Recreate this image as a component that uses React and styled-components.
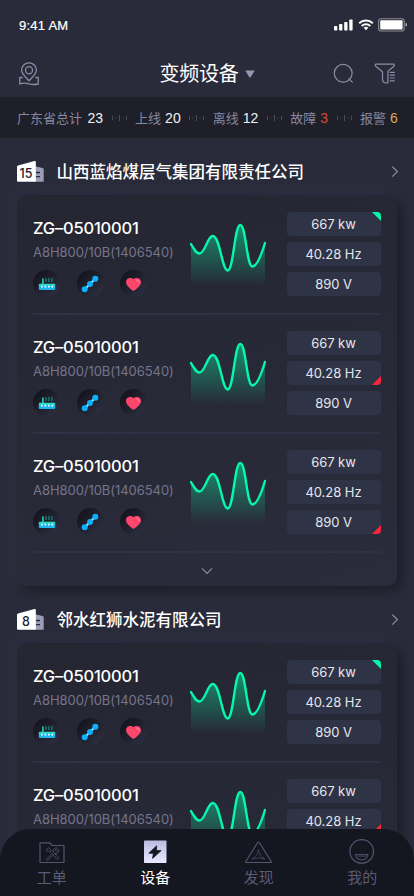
import React from 'react'
import styled, { createGlobalStyle } from 'styled-components'

const GlobalStyle = createGlobalStyle`
    * {
        box-sizing: border-box;
    }
    body {
        margin: 0;
        background: #2a2b3b;
        font-family: Inter, "Noto Sans CJK SC", sans-serif;
    }
    svg {
        display: block;
    }
`
const Screen = styled.div`
    width: 414px;
    height: 896px;
    overflow: hidden;
    display: flex;
    flex-direction: column;
    color: white;
    background: #2a2b3a;
`
const StatusBar = styled.div`
    height: 49px;
    flex: none;
    display: flex;
    align-items: center;
    justify-content: space-between;
    padding: 1px 6px 0 19px;
`
const Time = styled.span`
    font-family: "Liberation Sans", sans-serif;
    font-size: 13px;
    letter-spacing: .25px;
    -webkit-text-stroke: .2px white;
`
const StatusIcons = styled.div`
    display: flex;
    align-items: center;
    gap: 4.5px;
`
const TopBar = styled.header`
    height: 48px;
    flex: none;
    display: grid;
    grid-template-columns: 1fr auto 1fr;
    align-items: center;
    padding: 1px 18px 0 18px;
`
const Title = styled.h1`
    margin: 0;
    display: flex;
    align-items: center;
    gap: 6px;
    font-size: 20px;
    font-weight: 400;
    line-height: 30px;
    letter-spacing: -.2px;
`
const Tools = styled.div`
    display: flex;
    justify-content: flex-end;
    gap: 20px;
`
const Stats = styled.div`
    height: 41px;
    flex: none;
    display: flex;
    align-items: center;
    justify-content: space-between;
    padding: 0 16px 0 17px;
    background: #1e1f29;
`
const Stat = styled.span`
    display: flex;
    align-items: center;
    gap: 4px;
    font-size: 13px;
    line-height: 20px;
    color: #8788a0;

    &:first-child {
        gap: 5.5px;
    }
`
const StatValue = styled.span`
    font-family: "Liberation Sans", sans-serif;
    font-size: 14px;
    color: ${props => props.$color || '#f2f2f5'};
`
const List = styled.main`
    flex: 1;
    min-height: 0;
    overflow: hidden;
    margin-bottom: -31px;
    padding: 0 17px;
`
const Section = styled.section`
    height: 448px;
`
const SectionHead = styled.div`
    height: 57px;
    display: flex;
    align-items: center;
    padding: 10px 0 0;
    margin-right: -2px;
`
const Company = styled.h2`
    flex: 1;
    margin: 0 0 0 12.5px;
    font-size: 16.5px;
    font-weight: 500;
    line-height: 24px;
`
const Card = styled.div`
    height: 391px;
    padding: 1px 16px 0;
    border-radius: 10px;
    background: linear-gradient(165deg, #252632, #2b2c3b);
    box-shadow: 5px 5px 10px #1e1f2a, -6px -6px 14px #2e2f42;
`
const Row = styled.div`
    height: 119px;
    display: flex;
    align-items: flex-start;
    padding-top: 16px;
    border-bottom: 2px solid #2f3144;
`
const Info = styled.div`
    width: 157px;
`
const Code = styled.div`
    margin-top: 4px;
    font-size: 16.5px;
    font-weight: 500;
    line-height: 24px;
    letter-spacing: -.2px;
    white-space: nowrap;
`
const Model = styled.div`
    margin-top: 2px;
    font-size: 13px;
    line-height: 20px;
    letter-spacing: -.05px;
    color: #74758c;
    white-space: nowrap;
`
const Badges = styled.div`
    display: flex;
    gap: 16.5px;
    margin-top: 8px;
`
const Badge = styled.div`
    width: 27px;
    height: 27px;
    display: flex;
    align-items: center;
    justify-content: center;
    border-radius: 50%;
    background: linear-gradient(135deg, #11121a 8%, #1e1f2a 45%, #2e3043 92%);
`
const Chart = styled.div`
    padding-top: 10px;
`
const Readings = styled.div`
    display: flex;
    flex-direction: column;
    gap: 6px;
    margin-left: auto;
`
const Reading = styled.div`
    position: relative;
    width: 94px;
    height: 24px;
    overflow: hidden;
    border-radius: 4px;
    background: #2f3346;
    color: #e6e6ec;
    font-size: 13px;
    line-height: 24px;
    letter-spacing: -.05px;
    padding-right: 1px;
    text-align: center;

    &::after {
        content: '';
        display: ${props => props.$flag ? 'block' : 'none'};
        position: absolute;
        right: 0;
        ${props => props.$flag === 'up' ? 'top: 0;' : 'bottom: 0;'}
        width: 9px;
        height: 9px;
        background: ${props => props.$flag === 'up' ? '#05f8ab' : '#fb2438'};
        clip-path: ${props => props.$flag === 'up'
            ? 'polygon(0 0, 100% 0, 100% 100%)'
            : 'polygon(100% 0, 100% 100%, 0 100%)'};
    }
`
const More = styled.div`
    height: 33px;
    display: flex;
    align-items: center;
    justify-content: center;
    padding: 3px 1px 0 0;
`
const TabBar = styled.nav`
    position: relative;
    height: 67px;
    flex: none;
    display: grid;
    grid-template-columns: repeat(4, 1fr);
    border-radius: 31px 31px 0 0;
    background: #141620;
`
const Tab = styled.div`
    display: flex;
    flex-direction: column;
    align-items: center;
    padding-top: 9px;
    font-size: 15px;
    line-height: 24px;
    color: ${props => props.$active ? 'white' : '#5a5b76'};
`
const TabIcon = styled.div`
    height: 26px;
    display: flex;
    align-items: flex-end;
    margin-bottom: 2px;
`

const Signal = () => (
    <svg width="19" height="14" viewBox="0 0 19 14" fill="white">
        <rect x="0" y="8" width="3.3" height="4.5" rx=".8" />
        <rect x="5.1" y="6" width="3.3" height="6.5" rx=".8" />
        <rect x="10.2" y="4" width="3.3" height="8.5" rx=".8" />
        <rect x="15.3" y="1.5" width="3.3" height="11" rx=".8" />
    </svg>
)

const Wifi = () => (
    <svg width="16" height="14" viewBox="0 0 16 14">
        <path d="M8 12.3l-2.3-2.5a3.4 3.4 0 014.6 0z" fill="white" />
        <path d="M1.2 5.2a9.9 9.9 0 0113.6 0M3.7 8a6.300 6.300 0 018.6 0" fill="none" stroke="white" strokeWidth="2" />
    </svg>
)

const Battery = () => (
    <svg width="30" height="14" viewBox="0 0 30 14">
        <rect x=".6" y=".7" width="25.6" height="12.3" rx="2.6" fill="none" stroke="#8b8b91" strokeWidth="1.1" />
        <rect x="2.2" y="2.3" width="22.4" height="9.1" rx="1" fill="white" />
        <path d="M27.6 4.8v4c1.8-.7 1.8-3.3 0-4z" fill="#c8c8cc" />
    </svg>
)

const PinIcon = () => (
    <svg width="22" height="24" viewBox="0 0 22 24" fill="none" stroke="#8b8ca6" strokeWidth="1.3" strokeLinejoin="round" strokeLinecap="round">
        <path d="M11 18.8C8 15.5 3.6 11.7 3.6 8.200a7.400 7.400 0 0114.8 0c0 3.500-4.400 7.300-7.400 10.600z" />
        <circle cx="11" cy="8.2" r="3.5" />
        <path d="M4.200 15.500H1.800v6.500c3-1.200 6-1.200 9.200-.2 3.200.9 6.200.9 9.200.2v-6.500h-2.400" />
    </svg>
)

const SearchIcon = () => (
    <svg width="22" height="22" viewBox="0 0 22 22" fill="none" stroke="#8b8ca6" strokeWidth="1.2" strokeLinecap="round">
        <circle cx="11.2" cy="10.3" r="8.9" />
        <path d="M16.700 15.600l3.600 3.600" />
    </svg>
)

const FilterIcon = () => (
    <svg width="22" height="22" viewBox="0 0 22 22" fill="none" stroke="#8b8ca6" strokeWidth="1.2" strokeLinecap="round" strokeLinejoin="round">
        <path d="M1.700 1.200h18.200q.9.900 0 2l-6 5.200v11.600H11.500q-3-.6-3-3.500V8.700L1.700 3.200q-.9-1.100 0-2z" />
        <path d="M16.200 9.400h4.200M16.200 12.200h4.200M16.200 15h4.200M16.200 17.800h4.200" />
    </svg>
)

const Dots = () => (
    <svg width="15" height="8" viewBox="0 0 15 8" stroke="#494a5c" strokeWidth="1">
        <path d="M.5 2v4M4 3.5v1.200M7.500 1v6M11 3.500v1.200M14.500 2v4" />
    </svg>
)

const CountBox = styled.div`
    position: relative;
    width: 27px;
    height: 22px;
`
const CountLabel = styled.span`
    position: absolute;
    left: 0;
    top: 6px;
    width: 18px;
    color: #22232e;
    font-size: 12.5px;
    font-weight: 500;
    line-height: 14px;
    text-align: center;
`

const Count = ({ value }) => (
    <CountBox>
        <svg width="27" height="22" viewBox="0 0 27 22">
            <path d="M18 5.200l7.500 1.800q1.200.4 1.200 1.500v12.300H18z" fill="#9a9db6" />
            <path d="M19 11.500h4M19 15.700h4" stroke="#2a2b3a" strokeWidth="1.3" />
            <path d="M0 5.700q0-1 1-1.300L17.500.1q1.300-.3 1.300 1v19.700H1q-1 0-1-1z" fill="white" />
        </svg>
        <CountLabel>{value}</CountLabel>
    </CountBox>
)

const Chevron = () => (
    <svg width="8" height="12" viewBox="0 0 8 12" fill="none" stroke="#8b8ca6" strokeWidth="1.3">
        <path d="M1.300.6l5 5-5 5" />
    </svg>
)

const RouterIcon = () => (
    <svg width="18" height="14" viewBox="0 0 18 14">
        <rect x="4.2" y="1.5" width="1.5" height="6" fill="#21dfc0" />
        <path d="M7.500 1q1.400 1.700 0 4M10.500 1q1.400 1.700 0 4M13.500 1q1.400 1.700 0 4" fill="none" stroke="#137e79" strokeWidth="1.3" />
        <rect x=".8" y="6.7" width="16.4" height="3" rx="1" fill="#28e0bf" />
        <rect x=".8" y="8.5" width="16.4" height="4.4" rx="1" fill="#1db6ee" />
        <path d="M3 9.700h1.700M6.500 9.700h1.700M10 9.700h1.700M13.500 9.700h1.700" stroke="white" strokeWidth="1.8" />
    </svg>
)

const LinkIcon = () => (
    <svg width="18" height="18" viewBox="0 0 18 18">
        <path d="M3.500 14.500L14.500 3.500" stroke="#8ee6ff" strokeWidth="2.4" />
        <g fill="#0cb0ff">
            <circle cx="3.7" cy="14.3" r="3" />
            <circle cx="9" cy="9" r="2.9" />
            <circle cx="14.3" cy="3.7" r="3" />
        </g>
    </svg>
)

const HeartIcon = () => (
    <svg width="17" height="14" viewBox="0 1 17 14">
        <path d="M8.500 15C4.500 12.100 1 9.300 1 5.900 1 2 6 .7 8.500 3.300 11 .7 16 2 16 5.900c0 3.400-3.500 6.200-7.500 9.100z" fill="#fe466d" />
        <path d="M11.500 3.900q2.500-.1 2.700 2.600" fill="none" stroke="#ff7f98" strokeWidth="1" strokeLinecap="round" />
    </svg>
)

const wave = 'M1 22C4 27 6 31.500 9.500 31.500C15 31.500 17.500 14 22.800 14C30 14 32 48.500 37.700 48.500C43.500 48.500 44.500 3 50.300 3C56 3 56.500 44.500 62.500 44.500C66.500 44.500 71 34 75 21'

const Wave = ({ id }) => (
    <svg width="76" height="66" viewBox="0 0 76 66">
        <defs>
            <linearGradient id={id} x1="0" y1="0" x2="0" y2="1">
                <stop offset="0" stopColor="#10c68e" stopOpacity=".65" />
                <stop offset="1" stopColor="#10c68e" stopOpacity="0" />
            </linearGradient>
        </defs>
        <path d={wave + 'V64H1z'} fill={`url(#${id})`} />
        <path d={wave} fill="none" stroke="#05f8ab" strokeWidth="2.4" strokeLinecap="round" />
    </svg>
)

const OrderIcon = () => (
    <svg width="26" height="24" viewBox="0 0 26 24" fill="none" stroke="#54556f" strokeWidth="1.2" strokeLinejoin="round">
        <path d="M1 2.800h9.500l2.800 2.700H25v17H1z" />
        <g strokeWidth="1" stroke="#4a4b62">
            <path d="M7.500 19.200l7-7.200a3 3 0 013.800-4l-2 2 1.300 1.400 2-2a3 3 0 01-4 4l-7 7.200z" />
            <path d="M7 10l2.500-2.300 3 2.800-1.500 1.500M7 10l1.300 1.400 1.200-.5 1.500 1.600M14.300 15.200l4 4.200 1.500-1.400-4-4.200" />
        </g>
    </svg>
)

const DeviceIcon = () => (
    <svg width="26" height="24" viewBox="0 0 26 24">
        <defs>
            <linearGradient id="device" x1="0" y1="0" x2="0" y2="1">
                <stop offset="0" stopColor="#b9bbe0" />
                <stop offset="1" stopColor="#e9eaff" />
            </linearGradient>
        </defs>
        <rect x="2" y=".5" width="22.5" height="22.5" rx=".8" fill="url(#device)" />
        <path d="M14.700 5.800L6.800 13.200h4.600l-.8 5.200 8.500-7.800h-4.700z" fill="#141620" stroke="#141620" strokeWidth=".8" strokeLinejoin="round" />
    </svg>
)

const DiscoverIcon = () => (
    <svg width="28" height="24" viewBox="0 0 28 24" fill="none" stroke="#54556f" strokeLinejoin="round">
        <path d="M12.700 2.500q.8-1 1.600 0L26.200 21.500q.4 1-.6 1H1.400q-1 0-.6-1z" strokeWidth="1.2" />
        <path d="M13.500 9.500q.7 6.500 6.500 9.500-6.500-2.500-13 0Q12.800 16 13.500 9.500z" stroke="#414259" />
    </svg>
)

const MineIcon = () => (
    <svg width="26" height="26" viewBox="0 0 26 26" fill="none" stroke="#54556f" strokeWidth="1.2">
        <circle cx="12.7" cy="13.4" r="11.8" />
        <path d="M6.500 16.600h12.400q-1.200 5.300-6.200 5.300t-6.200-5.300z" stroke="#4a4b62" />
        <path d="M8.700 18.200h8" stroke="#3b3c50" />
    </svg>
)

const stats = [
    { label: '广东省总计', value: 23 },
    { label: '上线', value: 20 },
    { label: '离线', value: 12 },
    { label: '故障', value: 3, color: '#d64a33' },
    { label: '报警', value: 6, color: '#dca85e' },
]

const sections = [
    { count: 15, name: '山西蓝焰煤层气集团有限责任公司', flags: [['up'], [null, 'down'], [null, null, 'down']] },
    { count: 8, name: '邻水红狮水泥有限公司', flags: [['up'], [null, 'down']] },
]

const values = ['667 kw', '40.28 Hz', '890 V']

const Device = ({ id, flags }) => (
    <Row>
        <Info>
            <Code>ZG–05010001</Code>
            <Model>A8H800/10B(1406540)</Model>
            <Badges>
                <Badge><RouterIcon /></Badge>
                <Badge><LinkIcon /></Badge>
                <Badge><HeartIcon /></Badge>
            </Badges>
        </Info>
        <Chart><Wave id={id} /></Chart>
        <Readings>
            {values.map((value, i) => <Reading key={value} $flag={flags[i]}>{value}</Reading>)}
        </Readings>
    </Row>
)

const App = () => {
    return (
        <Screen>
            <GlobalStyle />
            <StatusBar>
                <Time>9:41 AM</Time>
                <StatusIcons>
                    <Signal />
                    <Wifi />
                    <Battery />
                </StatusIcons>
            </StatusBar>
            <TopBar>
                <PinIcon />
                <Title>
                    变频设备
                    <svg width="10" height="8" viewBox="0 0 10 8">
                        <path d="M1 .5h8q.8 0 .3.800L5.600 7.200q-.6.700-1.200 0L.7 1.300Q.2.500 1 .5z" fill="#9597b2" />
                    </svg>
                </Title>
                <Tools>
                    <SearchIcon />
                    <FilterIcon />
                </Tools>
            </TopBar>
            <Stats>
                {stats.map((stat, i) => (
                    <React.Fragment key={stat.label}>
                        {i > 0 && <Dots />}
                        <Stat>{stat.label}<StatValue $color={stat.color}>{stat.value}</StatValue></Stat>
                    </React.Fragment>
                ))}
            </Stats>
            <List>
                {sections.map((section, i) => (
                    <Section key={section.name}>
                        <SectionHead>
                            <Count value={section.count} />
                            <Company>{section.name}</Company>
                            <Chevron />
                        </SectionHead>
                        <Card>
                            {section.flags.map((flags, j) => <Device key={j} id={`wave${i}${j}`} flags={flags} />)}
                            <More>
                                <svg width="12" height="8" viewBox="0 0 12 8" fill="none" stroke="#8b8ca6" strokeWidth="1.2">
                                    <path d="M1 1.300l5 5 5-5" />
                                </svg>
                            </More>
                        </Card>
                    </Section>
                ))}
            </List>
            <TabBar>
                <Tab><TabIcon><OrderIcon /></TabIcon>工单</Tab>
                <Tab $active><TabIcon><DeviceIcon /></TabIcon>设备</Tab>
                <Tab><TabIcon><DiscoverIcon /></TabIcon>发现</Tab>
                <Tab><TabIcon><MineIcon /></TabIcon>我的</Tab>
            </TabBar>
        </Screen>
    )
}
export default App
